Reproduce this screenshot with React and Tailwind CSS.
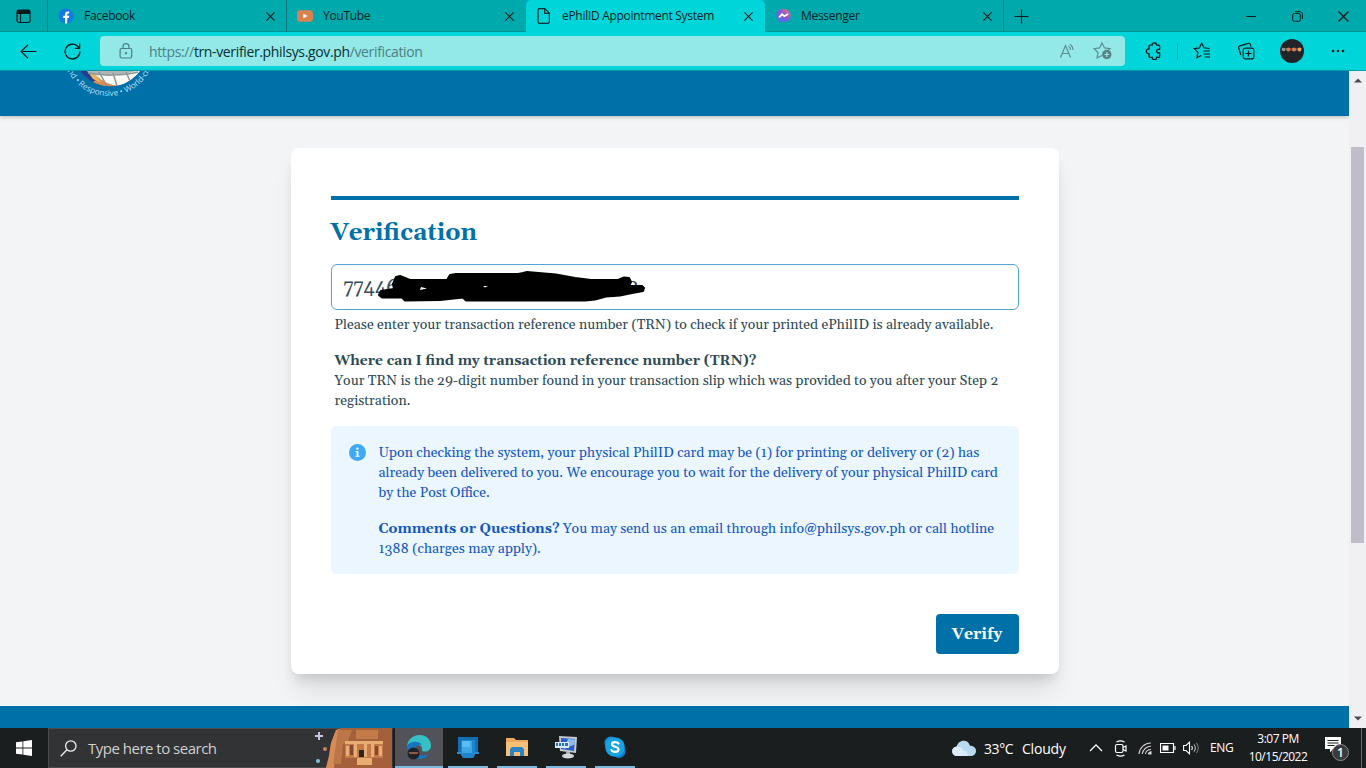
import clsx from "clsx";

const TABS = [
  { title: "Facebook", icon: <FacebookIcon />, line: true },
  { title: "YouTube", icon: <YoutubeIcon /> },
  { title: "ePhilID Appointment System", icon: <PageIcon />, active: true },
  { title: "Messenger", icon: <MessengerIcon />, line: true },
];

function FacebookIcon() {
  return (
    <svg width="16" height="16" viewBox="0 0 16 16">
      <circle cx="8" cy="8" r="7.6" fill="#1479e4" />
      <path d="M7 15.6V10H5.2V7.8H7V6.4c0-1.9 1-2.9 2.8-2.9l1.4.1v1.9h-.9c-.8 0-1.1.4-1.1 1v1.3h2L10.9 10H9.2v5.6z" fill="#fff" />
    </svg>
  );
}

function YoutubeIcon() {
  return (
    <svg width="16" height="16" viewBox="0 0 16 16">
      <rect x="0" y="2.3" width="16" height="11.5" rx="3" fill="#d8824f" />
      <path d="M6.3 5.6v4.8l4.2-2.4z" fill="#fff" />
    </svg>
  );
}

function PageIcon() {
  return (
    <svg width="16" height="16" viewBox="0 0 16 16" fill="none" stroke="#0b2b2e" strokeWidth="1.2">
      <path d="M3.6.6h5.2l4.6 4.6v8.6c0 .9-.6 1.5-1.5 1.5H3.6c-.9 0-1.500-.6-1.500-1.500V2.100c0-.9.6-1.500 1.500-1.500z" />
      <path d="M8.7.8v4.6h4.6" />
    </svg>
  );
}

function MessengerIcon() {
  return (
    <svg width="16" height="16" viewBox="0 0 16 16">
      <defs>
        <linearGradient id="msg" x1="0" y1="1" x2="1" y2="0">
          <stop offset="0" stopColor="#2c7df0" />
          <stop offset="0.55" stopColor="#8a56d8" />
          <stop offset="1" stopColor="#e8825f" />
        </linearGradient>
      </defs>
      <path d="M8.5.8C4.300.8 1.300 3.700 1.300 7.500c0 2 .9 3.800 2.400 5v2.400l2.200-1.200c.8.200 1.700.3 2.600.3 4.200 0 7.200-2.800 7.200-6.500S12.700.8 8.500.8z" fill="url(#msg)" />
      <path d="M4 9.500 7 6.300l2.400 1.900L13 6" stroke="#fff" strokeWidth="1.800" fill="none" />
    </svg>
  );
}

function Cross({ size = 9 }) {
  return (
    <svg width={size} height={size} viewBox="0 0 10 10" stroke="#082022" strokeWidth="1.300">
      <path d="M.5.5l9 9M9.500.5l-9 9" />
    </svg>
  );
}

function Tab({ title, icon, active, line }) {
  return (
    <div
      className={clsx(
        "flex w-[239px] items-center border-r pl-[10px] pr-[10px]",
        active ? "rounded-t-[5px] border-[#00d5d9] bg-[#00d5d9]" : "bg-clip-padding",
        line && "border-[#04777a]",
        !line && !active && "border-transparent"
      )}
    >
      {icon}
      <span className="ml-[10px] flex-1 whitespace-nowrap text-[12px] tracking-[-0.3px] text-[#062426]">{title}</span>
      <span className="flex w-3 justify-center">
        <Cross />
      </span>
    </div>
  );
}

function TabStrip() {
  return (
    <div className="flex h-8 bg-[#00a9ab] shadow-[inset_0_-1px_0_#049193]">
      <div className="flex w-12 items-center justify-center border-r border-[#04777a]">
        <svg width="15" height="15" viewBox="0 0 15 15" fill="none" stroke="#051c1d" strokeWidth="1.2">
          <rect x="1" y="1" width="13" height="12.5" rx="2" />
          <path d="M1.5 1.5h12v3h-12z" fill="#051c1d" />
          <path d="M4.5 4v9.5" />
        </svg>
      </div>
      {TABS.map((tab) => (
        <Tab key={tab.title} {...tab} />
      ))}
      <div className="flex w-[35px] items-center justify-center">
        <svg width="15" height="15" viewBox="0 0 15 15" stroke="#051c1d" strokeWidth="1.2">
          <path d="M7.5.5v14M.5 7.500h14" />
        </svg>
      </div>
      <div className="ml-auto flex text-black">
        <div className="flex w-[46px] items-center justify-center">
          <svg width="10" height="10" viewBox="0 0 10 10" stroke="#051c1d">
            <path d="M0 5.5h10" />
          </svg>
        </div>
        <div className="flex w-[46px] items-center justify-center">
          <svg width="11" height="11" viewBox="0 0 11 11" fill="none" stroke="#051c1d">
            <rect x=".7" y="2.5" width="7.6" height="7.8" rx="1.5" />
            <path d="M3 .7h4.800c1.500 0 2.600 1 2.600 2.500v4.800" />
          </svg>
        </div>
        <div className="flex w-[46px] items-center justify-center">
          <Cross size={11} />
        </div>
      </div>
    </div>
  );
}

function Toolbar() {
  return (
    <div className="flex h-[39px] items-center border-b border-[#06a3b0] bg-[#00d5d9] pl-[6px]">
      <div className="flex w-11 justify-center">
        <svg width="17" height="15" viewBox="0 0 17 15" fill="none" stroke="#051c1d" strokeWidth="1.2">
          <path d="M16.5 7.500H1M8 .7 1.100 7.500 8 14.300" />
        </svg>
      </div>
      <div className="flex w-11 justify-center">
        <svg width="17" height="17" viewBox="0 0 17 17" fill="none" stroke="#051c1d" strokeWidth="1.3">
          <path d="M15.900 8.500a7.400 7.400 0 1 1-2.300-5.300l2 2M15.600.5v4.800h-4.800" />
        </svg>
      </div>
      <div className="ml-[6px] flex h-[30px] w-[1025px] items-center rounded-[4px] bg-[#92e9e8] pl-[19px] pr-3">
        <svg width="14" height="16" viewBox="0 0 14 16" fill="none" stroke="#4d7f82" strokeWidth="1.2">
          <rect x="1.1" y="5.5" width="11.6" height="9.5" rx="1.5" />
          <path d="M4 5.500V3.700a3 3 0 0 1 6 0v1.800" />
          <circle cx="7" cy="10.2" r=".5" fill="#4d7f82" />
        </svg>
        <span className="ml-4 text-[14px] tracking-[-0.36px] text-[#4e8084]">
          https://<span className="text-[#0a2f33]">trn-verifier.philsys.gov.ph</span>/verification
        </span>
        <svg className="ml-auto" width="17" height="16" viewBox="0 0 17 16" fill="none" stroke="#5d8c90" strokeWidth="1.2">
          <path d="M1.500 14.500 6.500 2.500l5 12M3.200 10.500h6.600" />
          <path d="M9.500 3.200c1.300.8 2 2.200 2 3.700M10.800 1.500c2 1 3.100 3.200 3.100 5.400" />
        </svg>
        <svg className="ml-[17px]" width="20" height="18" viewBox="0 0 20 18" fill="none" stroke="#5d8c90" strokeWidth="1.2">
          <path d="M9 13.500 4 16l1-5.500L1 6.700l5.600-.8L9 1l2.500 4.900 5.500.8-2 1.800" />
          <circle cx="13.8" cy="12.5" r="4.7" fill="#5d7f83" stroke="none" />
          <path d="M13.800 10v5M11.300 12.500h5" stroke="#92e9e8" strokeWidth="1.2" />
        </svg>
      </div>
      <div className="ml-[5px] flex h-[17px] w-12 items-center justify-center border-r border-[#07a1a8]">
        <svg width="17" height="18" viewBox="0 0 17 18" fill="none" stroke="#051c1d" strokeWidth="1.3">
          <path d="M5.300 3.200h1.800a2.300 2.300 0 0 1 4.600 0h1.900c.6 0 1 .4 1 1v3.200h-1.200a1.700 1.700 0 0 0 0 3.600h1.200v3.400c0 .6-.4 1-1 1h-2a2.200 2.200 0 0 1-4.400 0H5c-.6 0-1-.4-1-1v-2.700H3.200a2.400 2.400 0 0 1 0-4.700H4V4.200c0-.6.5-1 1.300-1z" />
        </svg>
      </div>
      <div className="flex w-12 justify-center">
        <svg width="18" height="18" viewBox="0 0 18 18" fill="none" stroke="#051c1d" strokeWidth="1.2">
          <path d="M16.500 6.500 11 5.800 8.700 1.200 6.300 5.900 1.200 6.700l3.700 3.700-.9 5.300 4.200-2.200M10.500 9h6.500M10.500 12h6.500M11.500 15h5.500" />
        </svg>
      </div>
      <div className="flex w-10 justify-center">
        <svg width="18" height="18" viewBox="0 0 18 18" fill="none" stroke="#051c1d" strokeWidth="1.2">
          <rect x="6.2" y="6.2" width="10.6" height="10.6" rx="2" />
          <path d="M11.500 8.500v6M8.500 11.500h6" />
          <path d="M14 4.500 13.400 2.600c-.3-1-1.200-1.500-2.100-1.200L2.900 3.900c-1 .3-1.500 1.200-1.200 2.100l2.100 7" />
        </svg>
      </div>
      <div className="flex w-[52px] justify-center">
        <svg width="24" height="24" viewBox="0 0 24 24">
          <circle cx="12" cy="12" r="12" fill="#212326" />
          <path d="M1.500 9h20.500l-1.500 2.500H3z" fill="#71483a" />
          <circle cx="3.5" cy="10.5" r="1.8" fill="#7a9ba5" />
          <circle cx="8.5" cy="10.5" r="2" fill="#d6784f" />
          <circle cx="14" cy="10.5" r="2" fill="#dd7e50" />
          <circle cx="19.5" cy="10.5" r="1.9" fill="#e4a070" />
        </svg>
      </div>
      <div className="flex w-10 justify-center">
        <svg width="14" height="4" viewBox="0 0 14 4" fill="#051c1d">
          <circle cx="2" cy="2" r="1.3" />
          <circle cx="7" cy="2" r="1.3" />
          <circle cx="12" cy="2" r="1.3" />
        </svg>
      </div>
    </div>
  );
}

function Seal() {
  return (
    <svg className="ml-[60px]" width="98" height="45" viewBox="60 71 98 45">
      <defs>
        <clipPath id="globe">
          <circle cx="110" cy="50" r="36.5" />
        </clipPath>
        <path id="motto" d="M62.500 50a46 46 0 0 0 92 0" />
      </defs>
      <g clipPath="url(#globe)">
        <circle cx="110" cy="50" r="36.5" fill="#d98a52" />
        <path d="M70 60h12l14 20-10 6z" fill="#1d3f91" />
        <path d="M79 60l14 19 8 4-12-19z" fill="#e9b45b" />
        <ellipse cx="119" cy="50" rx="33" ry="35.5" fill="#f8f8f6" />
        <path d="M88 73c12 3 33 3 48-2V60H86z" fill="#aeb6b5" />
        <path d="M99 72l8 14M113 73l4 13M126 72l4 9M88 73c14 3 34 3 50-1" stroke="#8d9696" strokeWidth="1.5" fill="none" />
      </g>
      <text fontSize="8.2" fill="#b7dff2">
        <textPath href="#motto" startOffset="49.500%" textAnchor="middle">
          and • Responsive • World-cla
        </textPath>
      </text>
    </svg>
  );
}

// marker strokes covering most of the reference number
function Scribble() {
  return (
    <svg className="absolute left-[46px] top-[5px]" width="270" height="34" viewBox="378 270 270 34">
      <path
        d="M381 291 394 289 393 284 396 277 400 276 410 280H447L450 275 456 274H518L523 273 527 272 556 274.500 575 278 591 280H618L624 277.500 629 278 631 282 629 286H642L644 288 643 291 632 293 620 295.500 606 296.500 595 299.500 585 300.500H466L463 297.500 440 300 405 300.500 402 297.500H382L379 295z"
        fill="#000"
        stroke="#000"
        strokeWidth="2"
        strokeLinejoin="round"
      />
      <path d="M421 287l6 1.500-7 1.500zM483 286h5l-3 1.500z" fill="#fff" />
    </svg>
  );
}

function Card() {
  return (
    <main className="mx-auto mt-8 h-[526px] w-[768px] rounded-lg bg-white px-10 pt-12 font-['Georgia','Gelasio','Liberation_Serif',serif] oldstyle-nums shadow-[0_20px_25px_-5px_rgba(0,0,0,0.1),0_8px_12px_-4px_rgba(0,0,0,0.12)]">
      <div className="h-1 bg-[#0070a8]" />
      <h1 className="mt-[17px] text-[24px] font-bold leading-8 text-[#0070a8]">Verification</h1>
      <div className="relative mt-[15px] flex h-[46px] items-center rounded-md border border-[#4fa6d8] bg-white px-3 text-[20px] text-[#374c58]">
        <span>77446</span>
        <span className="ml-[230px]">2</span>
        <Scribble />
      </div>
      <div className="mt-[5px] whitespace-nowrap pl-1 text-[14px] leading-5 text-[#2d4a55]">
        <p>Please enter your transaction reference number (TRN) to check if your printed ePhilID is already available.</p>
        <p className="mt-4 font-bold">Where can I find my transaction reference number (TRN)?</p>
        <p>Your TRN is the 29-digit number found in your transaction slip which was provided to you after your Step 2</p>
        <p>registration.</p>
      </div>
      <div className="mt-[15px] flex rounded-md bg-[#ebf6ff] pb-[15px] pl-[18px] pt-[17px] text-[14px] leading-5 text-[#1357c0]">
        <svg className="mt-px shrink-0" width="17" height="17" viewBox="0 0 17 17">
          <circle cx="8.5" cy="8.5" r="8.5" fill="#3fa9f5" />
          <circle cx="8.4" cy="4.6" r="1.2" fill="#fff" />
          <path d="M6.500 7h2.900v4.700h1.200v1.100H6.400v-1.100h1.200V8.100H6.500z" fill="#fff" />
        </svg>
        <div className="ml-[13px] whitespace-nowrap">
          <p>Upon checking the system, your physical PhilID card may be (1) for printing or delivery or (2) has</p>
          <p>already been delivered to you. We encourage you to wait for the delivery of your physical PhilID card</p>
          <p>by the Post Office.</p>
          <p className="mt-4">
            <b>Comments or Questions?</b> You may send us an email through info@philsys.gov.ph or call hotline
          </p>
          <p>1388 (charges may apply).</p>
        </div>
      </div>
      <button className="ml-auto mt-10 block h-10 w-[83px] rounded-[4px] bg-[#0070a8] text-[16px] font-bold text-white">
        Verify
      </button>
    </main>
  );
}

function Scrollbar() {
  return (
    <div className="flex w-[17px] flex-col items-center bg-[#f0f0f2]">
      <svg className="mt-[7px]" width="8" height="5" viewBox="0 0 8 5" fill="#4a4a4a">
        <path d="M0 4.500 4 .5l4 4z" />
      </svg>
      <div className="mt-16 h-[396px] w-[13px] bg-[#c0bcc8]" />
      <svg className="mb-[7px] mt-auto" width="8" height="5" viewBox="0 0 8 5" fill="#4a4a4a">
        <path d="M0 .5l4 4 4-4z" />
      </svg>
    </div>
  );
}

function SearchArt() {
  return (
    <svg className="ml-auto mr-px" width="80" height="40" viewBox="312 728 80 40">
      <path d="M319 732v8M315 736h8" stroke="#c9c5dc" strokeWidth="2" />
      <circle cx="325" cy="749" r="2" fill="#cf8058" />
      <circle cx="318" cy="761" r="2" fill="#7fc4df" />
      <path d="M326 768l3-12 2-13 5-13 5-2h51v40z" fill="#a4603b" />
      <path d="M326 768l3-12 2-13 5-13 4-1-3 16-3 23z" fill="#d78c58" />
      <path d="M338 730h14l-4 11-5 3-2 20h-8z" fill="#bd7649" />
      <path d="M356 730h22v9h-22zM345 741h38v17h-38z" fill="#c17a48" />
      <path d="M345 741h38v3h-38zM346 746h3v10h-3zM354 744h3v13h-3zM364 744h3v13h-3zM371 744h3v13h-3zM379 746h3v10h-3zM357 758h15v7h-15z" fill="#e7ad73" />
      <path d="M359 750h5v7h-5z" fill="#2e2420" />
      <path d="M350 745h3v10h-3zM375 746h3v9h-3z" fill="#85472d" />
    </svg>
  );
}

const EdgeIcon = () => (
  <svg width="26" height="26" viewBox="0 0 26 26">
    <path d="M1 13C1 6 6.500 1 13.500 1S25 6 25 11.500c0 4-3 6-6.500 6-2.500 0-3-1-2.500-2 .6-2.300-.8-4-3.500-4.500z" fill="#35c1c3" />
    <path d="M1 12c2-5 12-6 15-1-5-1-7 2-7 5 0 5 6 7 14 4-2 3-6 5-10 5C6 25 1 20 1 12z" fill="#1477bf" />
    <circle cx="7.5" cy="19.5" r="6" fill="#202226" />
    <path d="M2.500 18h10l-1 2h-8z" fill="#8d5a45" />
  </svg>
);

const ScreenIcon = () => (
  <svg width="24" height="24" viewBox="0 0 24 24">
    <path d="M2 2h20v16H2z" fill="#136fb5" />
    <path d="M5 5h14v15l-2 3H7l-2-3z" fill="#1f86cc" />
    <path d="M6 6h10v12H6z" fill="#3ba6e8" />
    <path d="M6 6h8v6H6z" fill="#5cbdf0" />
    <path d="M1 17h4v2H1zM19 17h4v2h-4z" fill="#2f8cc9" />
  </svg>
);

const FolderIcon = () => (
  <svg width="24" height="24" viewBox="0 0 24 24">
    <path d="M1 3h8l2 2h12v16H1z" fill="#e9a95f" />
    <path d="M1 7h22v14H1z" fill="#f6c077" />
    <path d="M5 21v-7l2-2h10l2 2v7h-4v-4H9v4z" fill="#2b83c6" />
  </svg>
);

const MonitorIcon = () => (
  <svg width="26" height="26" viewBox="0 0 26 26">
    <path d="M6 2l18 1-1 16-16-2z" fill="#c3c9ce" />
    <path d="M8 4l14 1-1 12-13-2z" fill="#285fc6" />
    <path d="M15 5l7 .4-.5 5L11 15z" fill="#91bde9" />
    <path d="M2 8h14v6H2z" fill="#dceaf7" />
    <path d="M3 9h2v3H3zM6 9h2v3H6zM9 9h2v3H9zM12 9h3v3h-3z" fill="#2772bf" />
    <path d="M13 18h4v3h-4z" fill="#a3a9ad" />
    <ellipse cx="15" cy="22" rx="6" ry="2.5" fill="#d5d8da" />
  </svg>
);

const SkypeIcon = () => (
  <svg width="24" height="24" viewBox="0 0 24 24">
    <circle cx="8" cy="8" r="6.5" fill="#1292d8" />
    <circle cx="16" cy="16.5" r="6.5" fill="#0a7fd0" />
    <circle cx="12" cy="12" r="9.8" fill="#18a2e2" />
    <path d="M15.500 8.500C14.700 7 9 6.300 9 9.300c0 3.200 6.500 1.800 6.500 5.200 0 3.200-6 2.900-7 .6" fill="none" stroke="#fff" strokeWidth="2.2" strokeLinecap="round" />
  </svg>
);

const APPS = [ScreenIcon, FolderIcon, MonitorIcon, SkypeIcon];

function Taskbar() {
  return (
    <div className="flex h-10 bg-[#1b1e1f] text-white">
      <div className="flex w-12 items-center justify-center">
        <svg width="16" height="16" viewBox="0 0 16 16" fill="#fff">
          <path d="M0 2.300 6.500 1.400v6.200H0zM7.300 1.300 16 0v7.600H7.300zM0 8.400h6.500v6.200L0 13.700zM7.300 8.400H16V16l-8.700-1.300z" />
        </svg>
      </div>
      <div className="flex w-[345px] items-center border border-r-0 border-[#4a4b4c] bg-[#323334] pl-[11px]">
        <svg width="17" height="17" viewBox="0 0 17 17" fill="none" stroke="#f0f0f0" strokeWidth="1.3">
          <circle cx="10.8" cy="6" r="5.2" />
          <path d="M7 9.800.7 16.200" />
        </svg>
        <span className="ml-[11px] whitespace-nowrap text-[15px] tracking-[-0.5px] text-[#d0d0d0]">Type here to search</span>
        <SearchArt />
      </div>
      <div className="ml-[2px] flex w-12 flex-col items-center bg-[#52525b]">
        <div className="flex h-[38px] items-center">
          <EdgeIcon />
        </div>
        <div className="h-[2px] w-12 bg-[#7cb8df]" />
      </div>
      <div className="flex">
        {APPS.map((Icon, i) => (
          <div key={i} className="flex w-[49px] flex-col items-center">
            <div className="flex h-[38px] items-center">
              <Icon />
            </div>
            <div className="h-[2px] w-10 bg-[#7cb8df]" />
          </div>
        ))}
      </div>
      <Tray />
    </div>
  );
}

function Tray() {
  return (
    <div className="ml-auto flex items-center">
      <svg width="24" height="17" viewBox="0 0 24 17">
        <path d="M5 16a4.700 4.700 0 0 1-.3-9.400C5.500 3 8.300.8 11.600.8c3.300 0 5.600 2 6.400 4.900 3.500 0 6 2.200 6 5.200S21.500 16 18.500 16z" fill="#b9d9f1" />
        <path d="M5 16a4.700 4.700 0 0 1-.3-9.400c4-.5 6 2 6.800 4.400 2-.8 4 .3 4.500 5z" fill="#dcecf8" />
      </svg>
      <span className="ml-2 w-[38px] whitespace-nowrap text-[14px] tracking-[-0.4px]">33°C</span>
      <span className="w-[67px] text-[14px] tracking-[-0.2px]">Cloudy</span>
      <svg width="14" height="8" viewBox="0 0 14 8" fill="none" stroke="#fff" strokeWidth="1.3">
        <path d="M1 7l6-6 6 6" />
      </svg>
      <svg className="ml-[11px]" width="14" height="17" viewBox="0 0 14 17" fill="none" stroke="#fff" strokeWidth="1.2">
        <rect x="1.5" y="4.5" width="7.5" height="8" rx="1.5" />
        <path d="M9 7.500 12 6v5l-3-1.500M2.500 2c2.500-1.400 5.500-1.400 8 0M2.500 15c2.500 1.400 5.500 1.400 8 0" />
      </svg>
      <svg className="ml-[10px]" width="14" height="14" viewBox="0 0 14 14" fill="none" stroke="#cfcfcf" strokeWidth="1.1">
        <path d="M1 13A12 12 0 0 1 13 2M4.200 13A8.800 8.800 0 0 1 13 5.300M7.400 13A5.600 5.600 0 0 1 13 8.500" />
        <path d="M10.500 13a2.500 2.500 0 0 1 2.500-2.200V13z" fill="#fff" />
      </svg>
      <svg className="ml-2" width="16" height="10" viewBox="0 0 16 10" fill="none" stroke="#fff">
        <path d="M.5.5h13v9H.5zM15 3v4" strokeWidth="1.2" />
        <path d="M2.500 2.500h6v5h-6z" fill="#fff" stroke="none" />
      </svg>
      <svg className="ml-[7px]" width="17" height="14" viewBox="0 0 17 14" fill="none" stroke="#fff" strokeWidth="1.1">
        <path d="M.6 4.500h2.400L6.500 1.200v11.600L3 9.500H.6z" />
        <path d="M8.700 5c.8 1.200.8 2.800 0 4" />
        <path d="M11 3.500c1.600 2 1.600 5 0 7" stroke="#bbb" />
        <path d="M13.400 1.800c2.500 3 2.500 7.400 0 10.400" stroke="#777" />
      </svg>
      <span className="ml-[10px] w-[26px] text-[12px] tracking-[-0.3px]">ENG</span>
      <div className="ml-[8px] w-[68px] whitespace-nowrap text-center text-[12px] leading-[18px] tracking-[-0.5px]">
        <p>3:07 PM</p>
        <p>10/15/2022</p>
      </div>
      <div className="relative ml-[13px] h-6 w-[36px]">
        <svg className="mt-px" width="16" height="16" viewBox="0 0 16 16">
          <path d="M0 0h16v12H8l-3 3.500V12H0z" fill="#fff" />
          <path d="M2.500 3.500h11M2.500 6h11M2.500 8.500h7" stroke="#1b1e1f" />
        </svg>
        <span className="absolute left-[7px] top-[8px] flex h-[17px] w-[17px] items-center justify-center rounded-full border border-[#8a8a8a] bg-[#3a3b3c] text-[12px] font-semibold leading-none">
          1
        </span>
      </div>
      <div className="mr-1 h-10 w-px bg-[#6a6a6a]" />
    </div>
  );
}

export default function App() {
  return (
    <div className="flex h-[768px] w-[1366px] flex-col overflow-hidden font-['Open_Sans','Noto_Sans',sans-serif]">
      <TabStrip />
      <Toolbar />
      <div className="flex h-[657px]">
        <div className="flex w-[1349px] flex-col bg-[#f3f4f6]">
          <header className="h-[45px] bg-[#0070a8] shadow-[0_1px_4px_rgba(0,0,0,0.25)]">
            <Seal />
          </header>
          <Card />
          <footer className="mt-8 h-[22px] bg-[#0070a8]" />
        </div>
        <Scrollbar />
      </div>
      <Taskbar />
    </div>
  );
}
